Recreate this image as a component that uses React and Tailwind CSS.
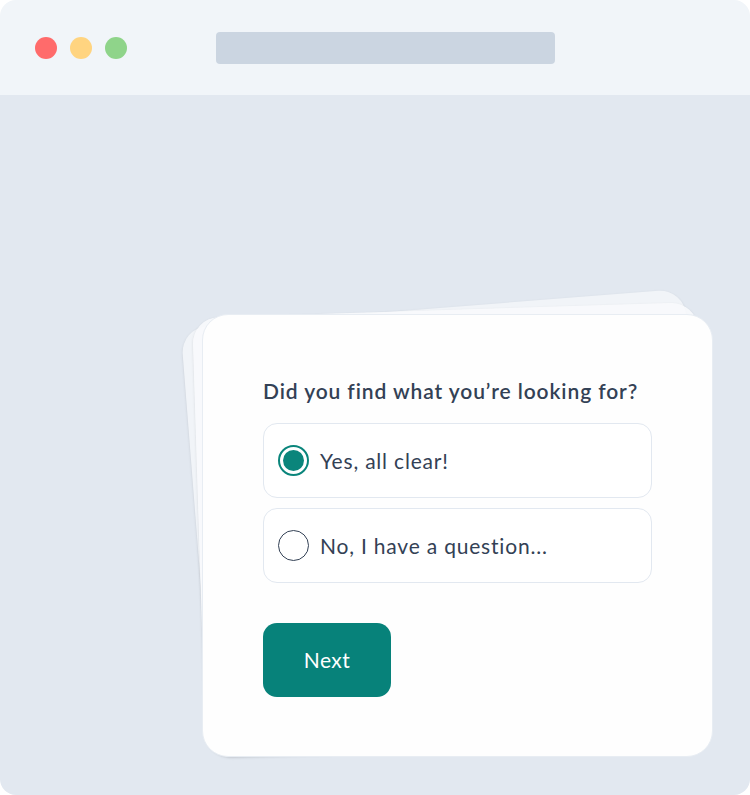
import React from "react";

const font = { fontFamily: '"Lato", "Noto Sans", sans-serif' };

const Radio = ({ checked }) =>
  checked ? (
    <span className="flex h-[31px] w-[31px] shrink-0 items-center justify-center rounded-full border-2 border-[#0a857b]">
      <span className="h-[21px] w-[21px] rounded-full bg-[#0a857b]" />
    </span>
  ) : (
    <span className="h-[31px] w-[31px] shrink-0 rounded-full border-[1.5px] border-[#334155]" />
  );

const Option = ({ label, checked }) => (
  <label className="flex h-[75px] items-center gap-[11px] rounded-[14px] border-[1.5px] border-[#e2e8f0] bg-white pl-[14px] text-[21px] tracking-[0.8px] text-[#334155]">
    <Radio checked={checked} />
    <span>{label}</span>
  </label>
);

export default function App() {
  return (
    <div className="h-[795px] w-[750px] bg-white" style={font}>
      <div className="flex h-full flex-col overflow-hidden rounded-[16px]">
        {/* Browser chrome */}
        <div className="flex h-[95px] shrink-0 items-center bg-[#f1f5f9] pl-[35px]">
          <div className="flex gap-[13px]">
            <span className="h-[22px] w-[22px] rounded-full bg-[#ff6b6b]" />
            <span className="h-[22px] w-[22px] rounded-full bg-[#ffd480]" />
            <span className="h-[22px] w-[22px] rounded-full bg-[#8fd48a]" />
          </div>
          <div className="ml-[89px] h-[32px] w-[339px] rounded-[4px] bg-[#cbd5e1]" />
        </div>

        {/* Page */}
        <div className="flex-1 bg-[#e2e8f0] pl-[202px] pt-[219px]">
          <div className="relative w-[511px]">
            {/* stacked cards behind */}
            <div className="absolute left-[-8px] top-[-6px] h-[360px] w-[505px] rotate-[-4.5deg] rounded-[26px] bg-white/50 shadow-sm" />
            <div className="absolute left-[-3px] top-[-4px] h-[440px] w-[505px] rotate-[-1.8deg] rounded-[26px] bg-[#f8fafc]/90 shadow-sm" />

            {/* Card */}
            <div className="relative flex h-[443px] flex-col rounded-[26px] border border-[#e8edf3] bg-[#fefefe] px-[60px] pt-[62px]">
              <h2 className="mb-[18px] text-[21px] font-semibold leading-[28px] tracking-[0.9px] text-[#334155]">
                Did you find what you’re looking for?
              </h2>
              <div className="flex flex-col gap-[10px]">
                <Option label="Yes, all clear!" checked />
                <Option label="No, I have a question..." />
              </div>
              <button className="mt-[40px] h-[74px] w-[128px] rounded-[14px] bg-[#07827a] text-[21px] tracking-[0.5px] text-white">
                Next
              </button>
            </div>
          </div>
        </div>
      </div>
    </div>
  );
}
